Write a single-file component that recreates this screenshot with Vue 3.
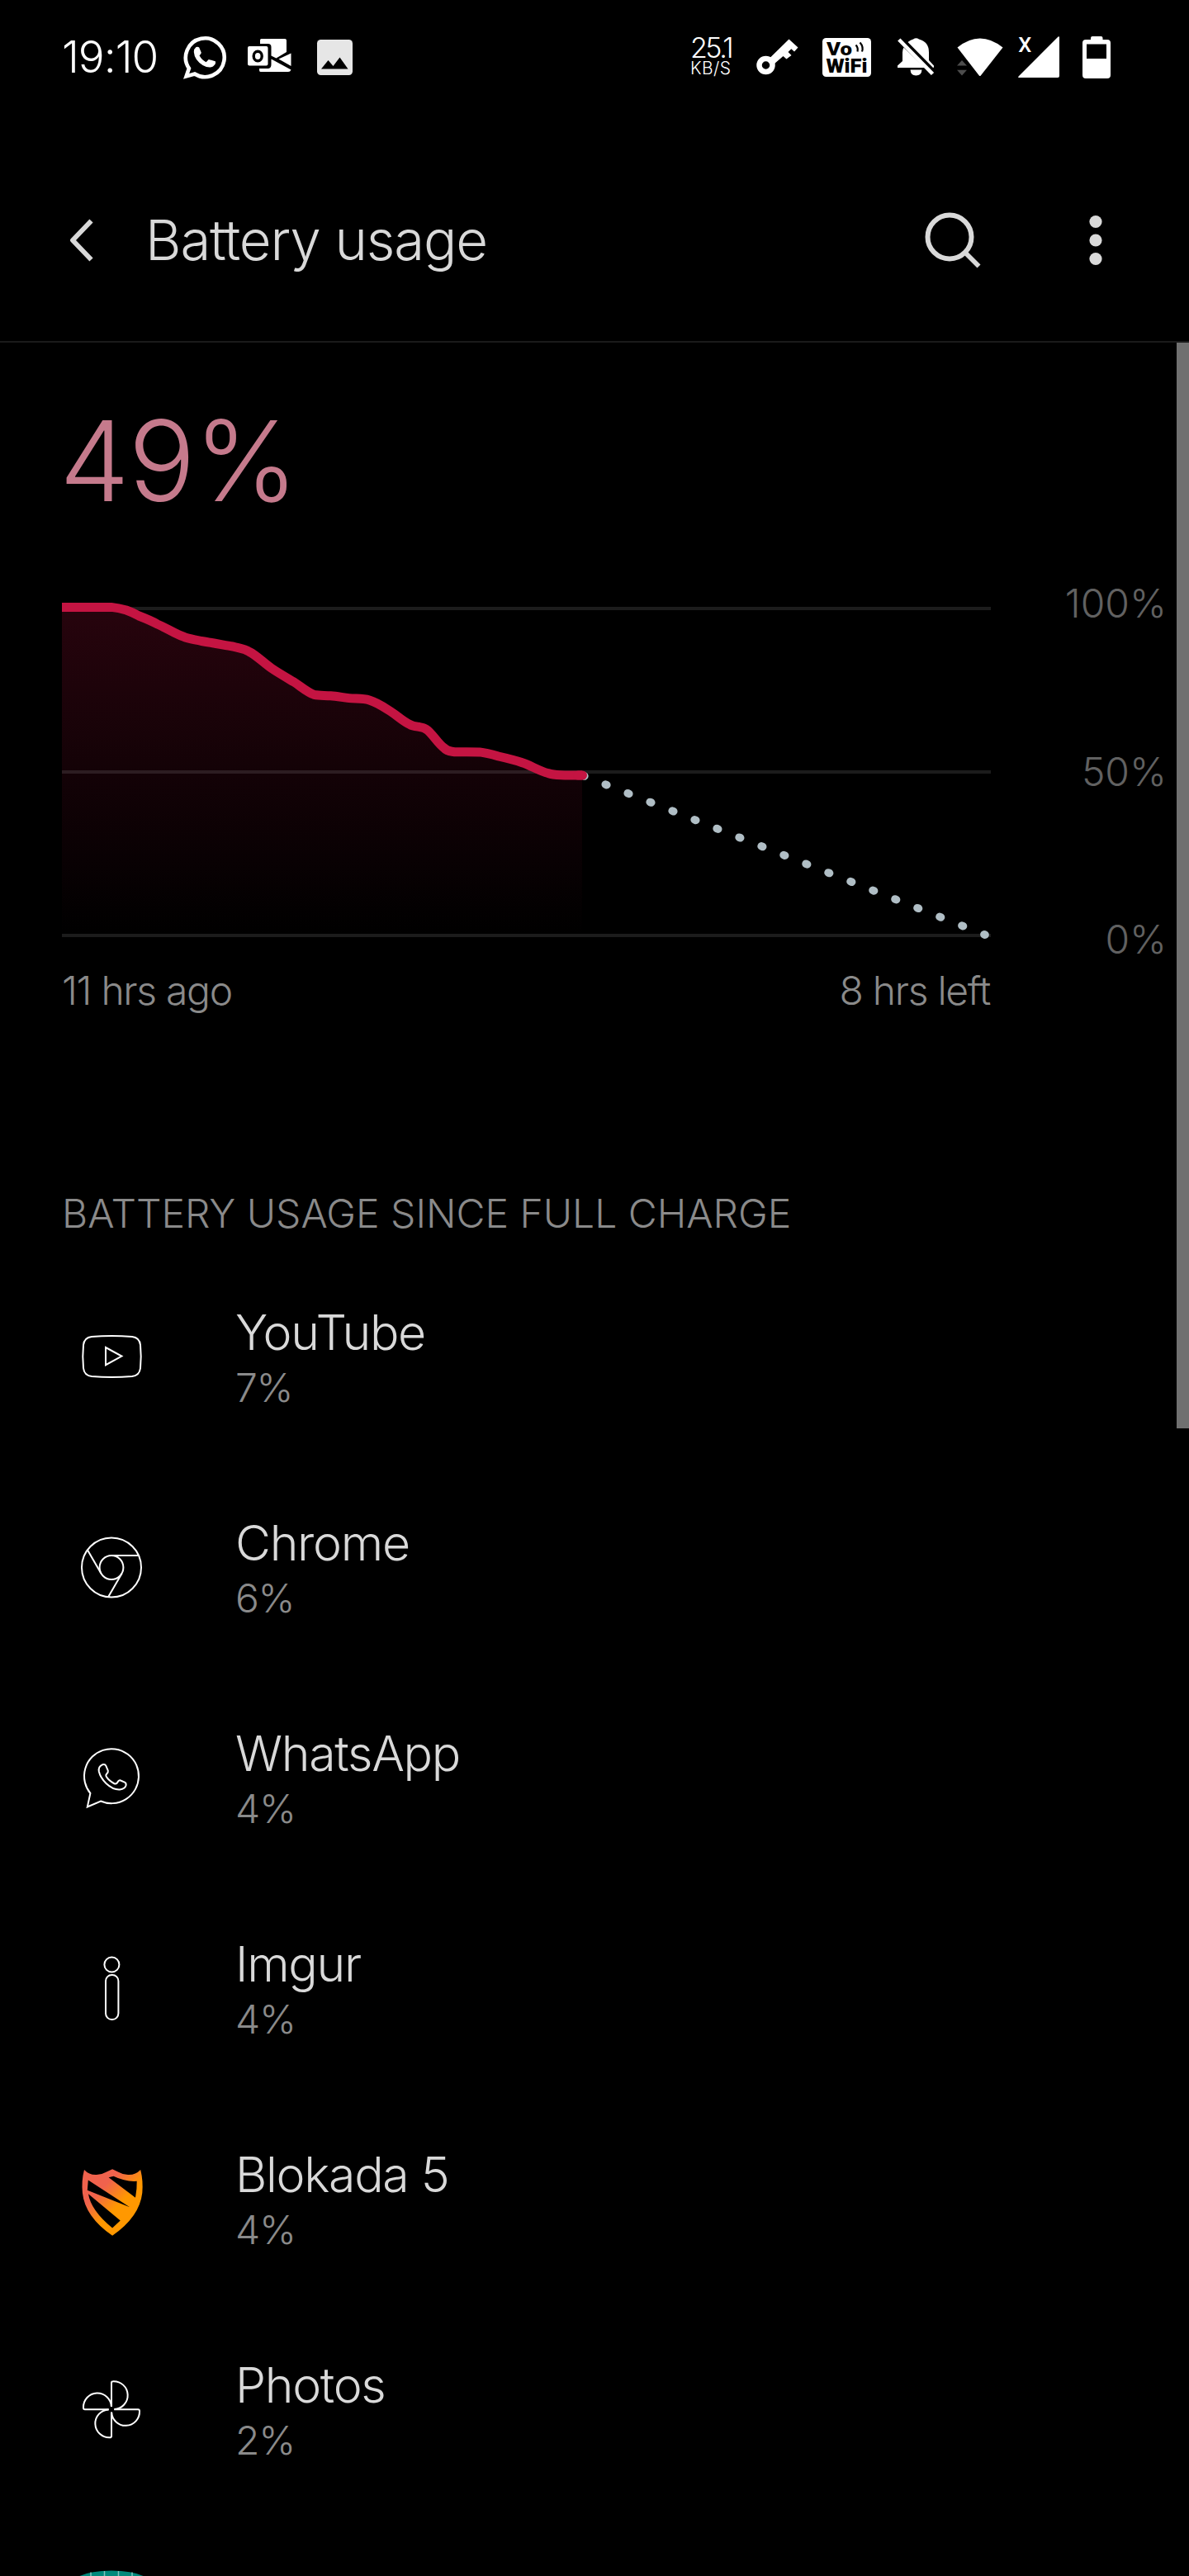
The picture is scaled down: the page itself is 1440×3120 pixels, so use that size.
<template>
  <div class="screen">
    <!-- Status bar -->
    <header class="status-bar">
      <span class="time">19:10</span>
      <svg class="status-whatsapp" width="52" height="53" viewBox="0 0 52 53">
        <path d="M3.6 49.4 L6.9 39.8 A23.4 23.4 0 1 1 13.8 46.5 Z" fill="none" stroke="#fff" stroke-width="4.6" />
        <path d="M12.8 20 Q12.8 16 15.5 14 Q17.8 13.2 19.2 14.5 L21.8 20.7 Q21.8 22 19.5 24.2 Q22.5 29.8 27.6 32.2 L30.8 29 L38.8 31.3 Q40 35 36 37.6 Q31 40 23.5 36 Q13.5 29.5 12.8 20 Z" fill="#fff" />
      </svg>
      <svg class="status-outlook" width="53" height="41" viewBox="0 0 53 41">
        <path d="M15 1.5 Q15 0 16.5 0 H45 Q47 0 47 2 V16 L34.5 23.5 L28.5 20.5 V10 Q28.5 6 24.5 6 H15 Z" fill="#fff" />
        <path d="M52.5 17.5 V33 L37.5 24.5 Z" fill="#fff" />
        <path d="M14 36 H25 Q28.5 35.5 28.5 31 V24.5 L52.5 37.5 Q51.5 40 49 40 H15.5 Q14 40 14 38 Z" fill="#fff" />
        <rect x="0" y="9" width="24.5" height="23.5" rx="2" fill="#fff" />
        <ellipse cx="12.2" cy="21" rx="5" ry="5.8" fill="none" stroke="#000" stroke-width="3.4" />
      </svg>
      <svg class="status-image" width="43" height="43" viewBox="0 0 43 43">
        <rect width="43" height="43" rx="4.5" fill="#e6e6e6" />
        <path d="M5 35.5 L13.5 25 L19.5 32 L27.5 21.5 L37.5 35.5 Z" fill="#000" />
      </svg>

      <div class="net-speed">
        <span class="net-value">25.1</span>
        <span class="net-unit">KB/S</span>
      </div>
      <svg class="status-key" width="51" height="44" viewBox="0 0 51 44">
        <circle cx="11.5" cy="32" r="8" fill="none" stroke="#fff" stroke-width="6.5" />
        <path d="M15.5 24 L39.5 0.5 L50.5 10.5 L46 15.5 L42.3 12.3 L38.5 16 L42.5 20 L36.5 24.5 L32.5 21 L21.5 30.5 Z" fill="#fff" />
      </svg>
      <svg class="status-vowifi" width="59" height="47" viewBox="0 0 59 47">
        <rect width="59" height="47" rx="4.5" fill="#fff" />
        <text x="5" y="20.7" font-size="21.5" textLength="31" lengthAdjust="spacingAndGlyphs">Vo</text>
        <text x="4.5" y="42.3" font-size="23.5" textLength="50" lengthAdjust="spacingAndGlyphs">WiFi</text>
        <path d="M40.5 8.5 Q43.5 11.5 42.5 16.5 M45.5 5.5 Q50 10.5 48 16.5" fill="none" stroke="#000" stroke-width="2.2" />
      </svg>
      <svg class="status-bell" width="45" height="46" viewBox="0 0 45 46">
        <path d="M12.5 5 Q16 2 19 1.5 Q22.5 -0.8 26 1.5 Q38 4.5 38 17.5 V27 L44 33.5 V35.5 L43 36 Z" fill="#fff" />
        <path d="M7.5 11.5 L33 36 H0 V33.5 L6 28 V17.5 Q6 14 7.5 11.5 Z" fill="#fff" />
        <path d="M15.5 38.5 H29.5 Q29 45.5 22.3 45.5 Q16 45.5 15.5 38.5 Z" fill="#fff" />
        <path d="M1.8 2 L42.5 43.5" stroke="#fff" stroke-width="4.6" />
      </svg>
      <svg class="status-wifi" width="56" height="47" viewBox="0 0 56 47">
        <path d="M0.5 11.5 Q27.8 -10.5 55.5 11.5 L28.8 45.5 Q27.8 46.5 26.8 45.5 Z" fill="#fff" />
        <path d="M0 33.5 L6 27 L12 33.5 Z M0 38.8 H12 L6 45.6 Z" fill="#4d4d4d" />
      </svg>
      <svg class="status-signal" width="50" height="50" viewBox="0 0 50 50">
        <path d="M48.5 0.6 Q50 -0.6 50 1.5 V48 Q50 50 48 50 H1 Q-0.6 50 0.6 48.5 Z" fill="#fff" />
        <text x="0.3" y="19.2" font-size="26.5" textLength="16" lengthAdjust="spacingAndGlyphs">X</text>
      </svg>
      <svg class="status-battery" width="34" height="51" viewBox="0 0 34 51">
        <path fill-rule="evenodd" d="M10 4 V2 Q10 0 12 0 H22.5 Q24.5 0 24.5 2 V4 H30 Q34 4 34 8 V47 Q34 51 30 51 H4 Q0 51 0 47 V8 Q0 4 4 4 Z M5 9.5 V27 H29 V9.5 Z" fill="#fff" />
      </svg>
    </header>

    <!-- App bar -->
    <nav class="app-bar">
      <svg class="back" width="30" height="52" viewBox="0 0 30 52">
        <path d="M26.5 2.5 L4 26 L26.5 49.5" fill="none" stroke="#d9d9d9" stroke-width="5.8" stroke-linejoin="round" />
      </svg>
      <h1>Battery usage</h1>
      <svg class="search" width="68" height="68" viewBox="0 0 68 68">
        <circle cx="30" cy="30" r="26.5" fill="none" stroke="#d9d9d9" stroke-width="6" />
        <path d="M48.5 48.5 L65.5 65.5" stroke="#d9d9d9" stroke-width="5.6" />
      </svg>
      <svg class="more" width="16" height="60" viewBox="0 0 16 60">
        <circle v-for="y in [7.5, 30, 52.5]" :key="y" cx="8" :cy="y" r="7.6" fill="#d9d9d9" />
      </svg>
    </nav>

    <main class="content">
      <div class="level">49%</div>

      <div class="chart-row">
        <svg class="chart" width="1125" height="450" viewBox="75 700 1125 450">
          <defs>
            <linearGradient id="usage-fill" gradientUnits="userSpaceOnUse" x1="0" y1="735" x2="0" y2="1133">
              <stop offset="0" stop-color="#c41442" stop-opacity="0.2" />
              <stop offset="1" stop-color="#c41442" stop-opacity="0" />
            </linearGradient>
          </defs>
          <path :d="areaPath" fill="url(#usage-fill)" />
          <path v-for="y in [737, 935, 1133]" :key="y" :d="`M75 ${y} H1200`" stroke="#fff" stroke-opacity="0.11" stroke-width="4" />
          <path d="M706.3 939.4 L1193 1132.2" class="forecast" />
          <path :d="linePath" class="usage-line" />
          <path d="M700 939 H705.5" class="usage-line" stroke-linecap="round" />
        </svg>
        <div class="axis">
          <span>100%</span>
          <span>50%</span>
          <span>0%</span>
        </div>
      </div>
      <div class="range">
        <span>11 hrs ago</span>
        <span>8 hrs left</span>
      </div>

      <h2>BATTERY USAGE SINCE FULL CHARGE</h2>

      <ul class="apps">
        <li v-for="app in apps" :key="app.name" class="app">
          <svg class="app-icon" width="120" height="120" viewBox="0 0 120 120">
            <template v-if="app.icon === 'youtube'">
              <path d="M36 36 Q60 34 85 36 Q94 37 95 46 Q96.4 60 95 74 Q94 83 85 84 Q60 86 36 84 Q27 83 26 74 Q24.6 60 26 46 Q27 37 36 36 Z" />
              <path d="M53 49 L72.4 59.6 L53 70.2 Z" />
            </template>
            <template v-else-if="app.icon === 'chrome'">
              <circle cx="60" cy="60.5" r="36" />
              <circle cx="60" cy="60.5" r="14.4" />
              <path v-for="a in [0, 120, 240]" :key="a" d="M60 46 H93" :transform="`rotate(${a} 60 60.5)`" />
            </template>
            <template v-else-if="app.icon === 'whatsapp'">
              <path d="M34.4 79 L30.8 95.5 L47 88.5 A33 33 0 1 0 34.4 79 Z" />
              <path d="M49 44.3 Q43.8 46.5 44.8 52.5 Q46.5 60 53.5 67 Q62 75 70 74.5 Q76.5 73.5 77.6 69.2 Q78 66.5 76 65.6 L70.5 63.3 Q69.2 63 68.2 64.4 L66.5 66.8 Q65.2 68 63 67 Q56.5 63.5 53.6 58.5 Q52.8 57 54 55.8 Q56.4 53.5 55.8 51.5 L53.3 45.6 Q52.2 43.3 49 44.3 Z" />
            </template>
            <template v-else-if="app.icon === 'imgur'">
              <circle cx="60.4" cy="31.5" r="9" />
              <rect x="53" y="44" width="15.4" height="54" rx="7.4" />
            </template>
            <template v-else-if="app.icon === 'blokada'">
              <defs>
                <linearGradient id="shield" gradientUnits="userSpaceOnUse" x1="48" y1="48" x2="68" y2="68">
                  <stop offset="0" stop-color="#f0624d" />
                  <stop offset="1" stop-color="#ff9800" />
                </linearGradient>
              </defs>
              <path
                class="shield"
                d="M27 25 Q33 31.5 42 31 Q48 31 53 28 L61.1 24.3 L69 28 Q74 31 80 31 Q89 31.5 95.2 25 Q98.5 38 97.3 53 Q94 82 61.1 104.8 Q28 82 24.9 53 Q23.5 38 27 25 Z
                   M56.6 34.2 L89 58.8 Q91 48 90.7 38.8 Q77 39.8 62.5 32.8 Z
                   M31.8 37.5 L82.1 70.2 L30.8 49.8 Z
                   M32 54.2 L70.7 86.5 L61.1 95.5 Q35 74 32 54.2 Z"
              />
            </template>
            <template v-else-if="app.icon === 'photos'">
              <path v-for="a in [0, 90, 180, 270]" :key="a" d="M60 57 V28 Q60 26.2 62 26.2 A16.9 16.9 0 0 1 63.5 60" :transform="`rotate(${a} 60 60.2)`" />
            </template>
            <template v-else>
              <path class="globe" d="M14 11.5 Q28 0.5 60 0.5 Q92 0.5 106 11.5 V120 H14 Z" />
              <path class="globe-lines" d="M35 2.5 V20 M51.5 1 V20 M68.5 1 V20 M85 2.5 V20" />
            </template>
          </svg>
          <div class="app-text">
            <div class="app-name">{{ app.name }}</div>
            <div class="app-percent">{{ app.percent }}</div>
          </div>
        </li>
      </ul>
    </main>

    <div class="scrollbar"></div>
  </div>
</template>

<script setup>
import { computed } from 'vue';

const apps = [
  { name: 'YouTube', percent: '7%', icon: 'youtube' },
  { name: 'Chrome', percent: '6%', icon: 'chrome' },
  { name: 'WhatsApp', percent: '4%', icon: 'whatsapp' },
  { name: 'Imgur', percent: '4%', icon: 'imgur' },
  { name: 'Blokada 5', percent: '4%', icon: 'blokada' },
  { name: 'Photos', percent: '2%', icon: 'photos' },
  { name: '', percent: '', icon: 'globe' },
];

// Battery level over time, in chart units
const points = [
  [75, 735.4], [134.8, 735.4], [153, 739], [168.3, 746], [190.6, 756],
  [222, 771], [244, 776.5], [282, 783], [302, 789.5], [329, 809.5],
  [356, 826], [380.4, 841.4], [400.4, 842.8], [422.8, 845.6], [447.3, 848],
  [469.6, 859.5], [496.4, 877.5], [516.5, 883.5], [538, 906], [550, 910.7],
  [581, 910.9], [603.6, 916], [632.6, 923.8], [663.8, 936.5], [684, 938.9],
  [705, 939],
];

// Smooth the samples with a horizontal-safe Catmull-Rom spline
const linePath = computed(() => {
  let d = `M${points[0][0]} ${points[0][1]}`;
  for (let i = 0; i < points.length - 1; i++) {
    const p0 = points[i - 1] || points[i];
    const p1 = points[i];
    const p2 = points[i + 1];
    const p3 = points[i + 2] || p2;
    const c1y = Math.max(p1[1], Math.min(p2[1], p1[1] + (p2[1] - p0[1]) / 6));
    const c2y = Math.max(p1[1], Math.min(p2[1], p2[1] - (p3[1] - p1[1]) / 6));
    // keep handles inside their own segment
    const step = (p2[0] - p1[0]) / 3;
    d += ` C${p1[0] + step} ${c1y} ${p2[0] - step} ${c2y} ${p2[0]} ${p2[1]}`;
  }
  return d;
});

const areaPath = computed(() => `${linePath.value} V1133 H75 Z`);
</script>

<style>
body {
  background: #000;
}
</style>

<style scoped>
.screen {
  position: relative;
  width: 1440px;
  height: 3120px;
  overflow: hidden;
  background: #000;
  color: #d9d9d9;
  font-family: Inter, "Liberation Sans", sans-serif;
  font-weight: 300;
}

svg {
  display: block;
  flex: none;
  overflow: visible;
}

.status-bar {
  display: flex;
  align-items: center;
  box-sizing: border-box;
  height: 138px;
  padding: 0 95px 0 75px;
  color: #fff;
}

.time {
  width: 147px;
  font-size: 53px;
  line-height: 60px;
  letter-spacing: -1px;
  white-space: nowrap;
}

.status-outlook {
  margin-left: 26px;
  margin-bottom: 4px;
}

.status-image {
  margin-left: 31px;
}

.net-speed {
  display: flex;
  flex-direction: column;
  width: 52px;
  margin-left: auto;
  padding-top: 2px;
  white-space: nowrap;
}

.net-value {
  font-size: 34px;
  line-height: 26px;
  letter-spacing: -2.5px;
}

.net-unit {
  font-size: 21px;
  line-height: 24px;
  letter-spacing: 0.4px;
}

.status-key {
  margin-left: 28px;
}

.status-vowifi {
  margin-left: 29px;
}

.status-vowifi text {
  font-family: Roboto, sans-serif;
  font-weight: 900;
}

.status-bell {
  margin-left: 32px;
}

.status-wifi {
  margin-left: 27px;
}

.status-signal {
  margin-left: 18px;
}

.status-signal text {
  fill: #fff;
  font-family: Roboto, sans-serif;
  font-weight: 500;
}

.status-battery {
  margin-left: 28px;
}

.app-bar {
  display: flex;
  align-items: center;
  box-sizing: border-box;
  height: 277px;
  padding: 31px 105px 0 84px;
  border-bottom: 2px solid #1a1a1a;
}

h1 {
  flex: 1;
  margin: 0 0 0 62px;
  font-size: 67px;
  font-weight: 300;
  line-height: 80px;
  letter-spacing: -1.1px;
}

.search {
  margin-right: 131px;
}

.content {
  padding: 73px 27px 0 75px;
}

.level {
  margin-left: -3px;
  font-size: 135px;
  line-height: 140px;
  letter-spacing: -1.5px;
  color: #c57a8c;
}

.chart-row {
  display: flex;
  justify-content: space-between;
  height: 450px;
  margin-top: 72px;
}

.forecast {
  fill: none;
  stroke: #b0bec5;
  stroke-width: 9.6;
  stroke-linecap: round;
  stroke-dasharray: 1.6 27.42;
}

.usage-line {
  fill: none;
  stroke: #c41442;
  stroke-width: 11;
}

.axis {
  display: flex;
  flex-direction: column;
  gap: 147.5px;
  padding-top: 3px;
  font-size: 48px;
  line-height: 56px;
  text-align: right;
  color: #616161;
}

.range {
  display: flex;
  justify-content: space-between;
  width: 1124px;
  font-size: 48px;
  line-height: 99px;
  letter-spacing: -1.3px;
  color: #8a8a8a;
}

h2 {
  margin: 191px 0 0;
  font-size: 48px;
  font-weight: 300;
  line-height: 60px;
  color: #8a8a8a;
}

.apps {
  margin: 15px 0 0;
  padding: 0;
  list-style: none;
}

.app {
  display: flex;
  align-items: center;
  height: 255px;
}

.app-icon {
  fill: none;
  stroke: #fff;
  stroke-width: 2;
}

.shield {
  fill: url(#shield);
  fill-rule: evenodd;
  stroke: none;
}

.globe {
  fill: #00897b;
  stroke: none;
}

.globe-lines {
  stroke: #80c4bd;
  stroke-width: 1.5;
}

.app-text {
  margin-left: 90px;
  padding-top: 9px;
  line-height: 67px;
}

.app-name {
  font-size: 59px;
  letter-spacing: -1.3px;
}

.app-percent {
  font-size: 48px;
  letter-spacing: -1.3px;
  color: #8a8a8a;
}

.scrollbar {
  position: absolute;
  top: 415px;
  right: 0;
  width: 15px;
  height: 1315px;
  background: #707070;
}
</style>
